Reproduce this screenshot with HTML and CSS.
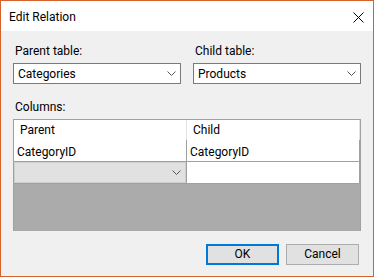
FILE: index.html
```html
<!DOCTYPE html>
<html>
<head>
<meta charset="utf-8">
<link rel="stylesheet" href="styles.css">
</head>
<body>
<div class="window">
  <div class="titlebar">
    <span class="title">Edit Relation</span>
    <svg class="close" width="11" height="11" viewBox="0 0 11 11"><path d="M0.5 0.5 L10.5 10.5 M10.5 0.5 L0.5 10.5" stroke="#000" stroke-width="1" fill="none"/></svg>
  </div>
  <div class="content">
    <div class="tables">
      <div class="field">
        <div class="label">Parent table:</div>
        <div class="combo"><span>Categories</span><svg class="chev" width="9" height="5" viewBox="0 0 9 5"><path d="M0.5 0.5 L4.5 4.5 L8.5 0.5" stroke="#555" fill="none"/></svg></div>
      </div>
      <div class="field">
        <div class="label">Child table:</div>
        <div class="combo"><span>Products</span><svg class="chev" width="9" height="5" viewBox="0 0 9 5"><path d="M0.5 0.5 L4.5 4.5 L8.5 0.5" stroke="#555" fill="none"/></svg></div>
      </div>
    </div>
    <div class="label columns-label">Columns:</div>
    <div class="grid">
      <div class="row header">
        <div class="cell">Parent</div>
        <div class="cell">Child</div>
      </div>
      <div class="row data">
        <div class="cell">CategoryID</div>
        <div class="cell">CategoryID</div>
      </div>
      <div class="row data newrow">
        <div class="cell combo-cell"><svg class="chev" width="9" height="5" viewBox="0 0 9 5"><path d="M0.5 0.5 L4.5 4.5 L8.5 0.5" stroke="#555" fill="none"/></svg></div>
        <div class="cell"></div>
      </div>
    </div>
    <div class="buttons">
      <button class="btn default">OK</button>
      <button class="btn">Cancel</button>
    </div>
  </div>
</div>
</body>
</html>
```
FILE: styles.css
```css
html, body {
  margin: 0;
  padding: 0;
}
body {
  font-family: Roboto, "Noto Sans", sans-serif;
  font-size: 12px;
  color: #000;
}
.window {
  width: 374px;
  height: 277px;
  box-sizing: border-box;
  border: 1px solid #d6612b;
  display: flex;
  flex-direction: column;
  background: #f0f0f0;
}
.titlebar {
  height: 30px;
  flex: none;
  background: #fff;
  display: flex;
  align-items: center;
  padding-left: 8px;
}
.title {
  line-height: 16px;
  padding-top: 1px;
}
.close {
  margin-left: auto;
  margin-right: 9px;
  margin-top: 2px;
}
.content {
  flex: 1;
  padding: 12px 12px 11px 12px;
  display: flex;
  flex-direction: column;
}
.tables {
  display: grid;
  grid-template-columns: 168px 168px;
  column-gap: 12px;
}
.label {
  line-height: 16px;
  height: 16px;
  padding-left: 2px;
  margin-bottom: 4px;
}
.combo {
  height: 21px;
  box-sizing: border-box;
  border: 1px solid #7a7a7a;
  background: #fff;
  display: flex;
  align-items: center;
  padding-left: 4px;
}
.chev {
  margin-left: auto;
  margin-right: 4px;
}
.columns-label {
  margin-top: 15px;
}
.grid {
  height: 112px;
  box-sizing: border-box;
  border: 1px solid #a0a0a0;
  border-bottom-color: #ababab;
  background: #ababab;
}
.row {
  display: flex;
}
.cell {
  width: 172px;
  border-right: 1px solid #a0a0a0;
  background: #fff;
  box-sizing: content-box;
}
.header .cell {
  height: 20px;
  line-height: 20px;
  padding-left: 6px;
  width: 166px;
  border-right-color: #e3e3e3;
}
.data .cell {
  height: 21px;
  line-height: 21px;
  padding-left: 3px;
  width: 169px;
  border-bottom: 1px solid #a0a0a0;
}
.header + .data .cell {
  height: 19px;
  padding-top: 2px;
  line-height: 20px;
}
.combo-cell.cell {
  background: #e1e1e1;
  display: flex;
  align-items: center;
  box-shadow: inset 0 0 0 1px #cfcfcf;
}
.combo-cell .chev {
  margin-right: 5px;
}
.buttons {
  margin-top: 13px;
  display: flex;
  justify-content: flex-end;
  gap: 7px;
  padding-right: 2px;
}
.btn {
  width: 73px;
  height: 21px;
  box-sizing: border-box;
  border: 1px solid #adadad;
  background: #e1e1e1;
  font-family: Roboto, "Noto Sans", sans-serif;
  font-size: 12px;
  color: #000;
  padding: 0;
  margin: 0;
  line-height: 17px;
}
.btn.default {
  border: 2px solid #0078d7;
}
```
